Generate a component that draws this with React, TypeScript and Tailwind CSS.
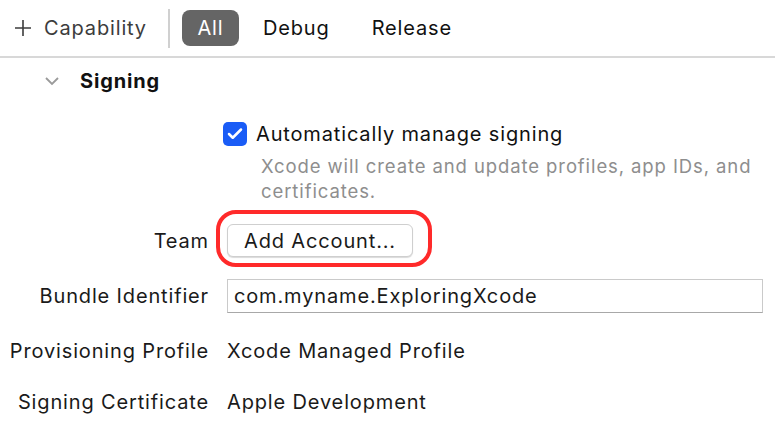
import { Check } from "lucide-react";

const FONT = { fontFamily: "Inter, 'Noto Sans', sans-serif" };

function Row({
  label,
  children,
  className = "",
}: {
  label: string;
  children: React.ReactNode;
  className?: string;
}) {
  return (
    <div className={`flex items-center ${className}`}>
      <div className="w-[209px] shrink-0 text-right text-[20px] leading-[24px] tracking-[0.85px] text-[#1a1a1a]">
        {label}
      </div>
      <div className="ml-[18px] flex-1 text-[20px] leading-[24px] tracking-[0.85px] text-[#1a1a1a]">
        {children}
      </div>
    </div>
  );
}

export default function App() {
  return (
    <div
      className="h-[424px] w-[775px] overflow-hidden bg-white antialiased"
      style={FONT}
    >
      <div className="flex h-[58px] items-center border-b-2 border-[#d8d8d8] text-[20px] tracking-[0.85px]">
        <div className="flex items-center pl-[14px] text-[#3c3c3c]">
          <svg width="18" height="18" viewBox="0 0 18 18" className="mr-[12px]">
            <path d="M9 1v16M1 9h16" stroke="#3c3c3c" strokeWidth="1.6" />
          </svg>
          <span>Capability</span>
        </div>
        <div className="ml-[21px] h-[39px] w-[2px] bg-[#d0d0d0]" />
        <div className="ml-[12px] flex h-[36px] w-[57px] items-center justify-center rounded-[8px] bg-[#656565] text-white">
          All
        </div>
        <div className="ml-[24px] text-[#111]">Debug</div>
        <div className="ml-[42px] text-[#111]">Release</div>
      </div>

      <div className="flex h-[42px] items-center pt-[3px]">
        <svg width="16" height="10" viewBox="0 0 16 10" className="ml-[44px]">
          <path d="M2 2l6 6 6-6" fill="none" stroke="#9a9a9a" strokeWidth="1.8" />
        </svg>
        <span className="ml-[20px] text-[20px] font-bold tracking-[0.85px] text-[#111]">
          Signing
        </span>
      </div>

      <div className="mt-[22px] flex items-center pl-[223px]">
        <div className="flex h-[24px] w-[24px] items-center justify-center rounded-[5px] bg-[#1a5cf6]">
          <Check size={18} strokeWidth={3.4} color="white" />
        </div>
        <span className="ml-[9px] text-[20px] leading-[24px] tracking-[0.85px] text-[#111]">
          Automatically manage signing
        </span>
      </div>
      <div className="mt-[8px] pl-[261px] text-[18.5px] leading-[25px] tracking-[0.9px] text-[#8e8e8e]">
        Xcode will create and update profiles, app IDs, and
        <br />
        certificates.
      </div>

      <Row label="Team" className="mt-[20px]">
        <div className="relative w-[186px]">
          <div className="flex h-[33px] items-center justify-center rounded-[6px] border border-[#cfcfcf] bg-white shadow-[0_1px_1px_rgba(0,0,0,0.15)]">
            Add Account...
          </div>
          <div className="pointer-events-none absolute -left-[11px] -right-[19px] -top-[14px] -bottom-[10px] rounded-[20px] border-[4px] border-[#ff2a2a]" />
        </div>
      </Row>

      <Row label="Bundle Identifier" className="mt-[22px]">
        <div className="mr-[12px] flex h-[34px] items-center border border-[#cacaca] border-b-[#a8a8a8] pl-[6px]">
          com.myname.ExploringXcode
        </div>
      </Row>

      <Row label="Provisioning Profile" className="mt-[26px]">
        Xcode Managed Profile
      </Row>

      <Row label="Signing Certificate" className="mt-[27px]">
        Apple Development
      </Row>
    </div>
  );
}
